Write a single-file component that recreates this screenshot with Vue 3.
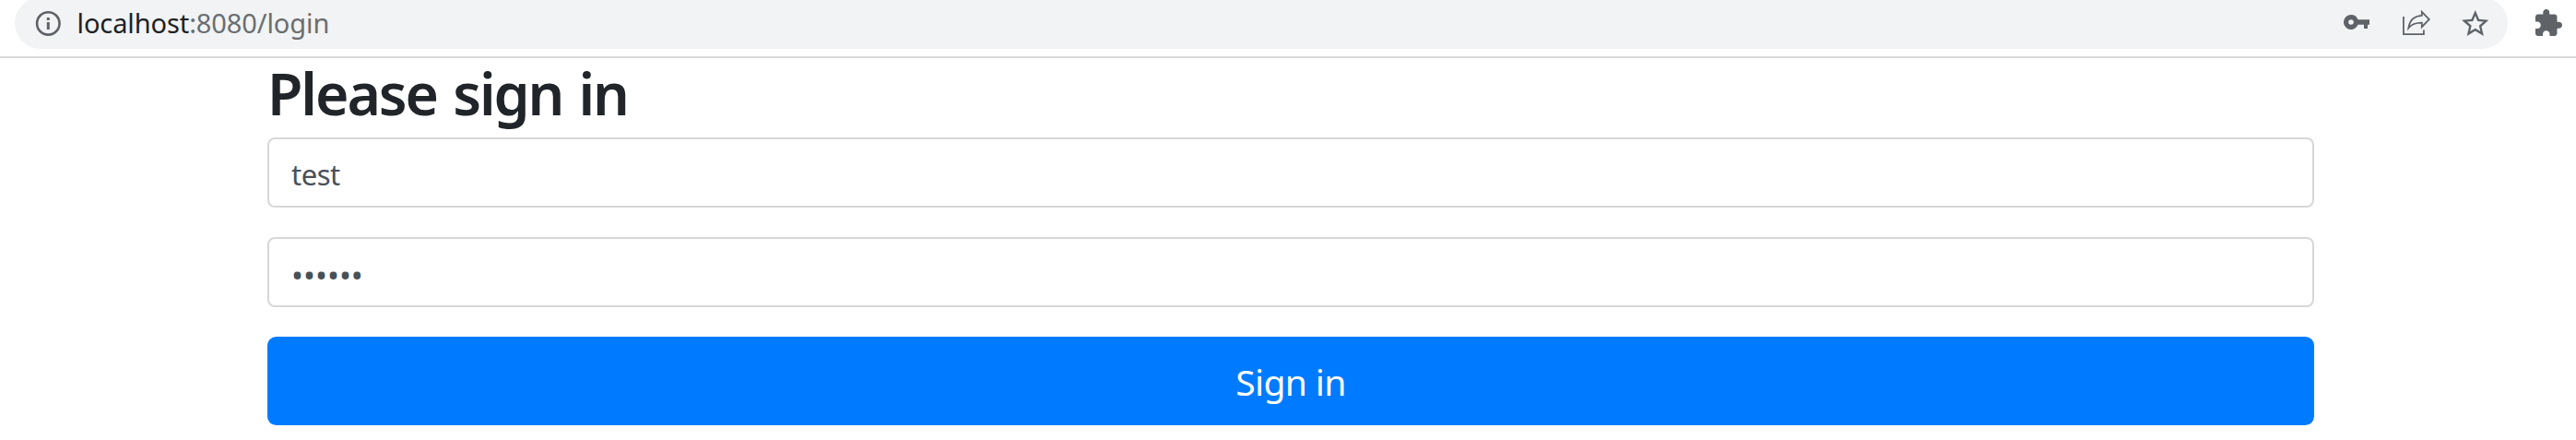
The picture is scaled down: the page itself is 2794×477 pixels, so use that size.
<script setup>
import { ref } from 'vue'
const username = ref('test')
const password = ref('secret')
</script>

<template>
  <div class="browser">
    <header class="toolbar">
      <div class="omnibox">
        <svg class="info" viewBox="0 0 32 32"><circle cx="16.3" cy="16.4" r="12.2" fill="none" stroke="#5f6368" stroke-width="2.6" /><path d="M14.800 10h3v2.900h-3zM14.800 15h3v8h-3z" fill="#5f6368" /></svg>
        <div class="url"><span class="host">localhost</span>:8080/login</div>
        <div class="actions">
          <svg class="key" viewBox="0 0 28 16" fill="#5f6368"><path fill-rule="evenodd" d="M8 0a8 8 0 1 0 7.5 10.700H22V15h4v-4.300h2V5.300H15.500A8 8 0 0 0 8 0zM8 5.200a2.800 2.800 0 1 1 0 5.600a2.800 2.800 0 0 1 0-5.600z" /></svg>
          <svg class="share" viewBox="0 0 30 28" fill="none" stroke="#5f6368" stroke-width="1.8"><path d="M.9 7v19.200H22.900V21.500" /><path d="M20.800 1.800L28.800 10L20.800 18.200V13.700C14 13.700 9.500 15.500 6.300 19.500C7.300 12 12 6.500 20.800 5.900Z" /></svg>
          <svg class="star" viewBox="2 2 20 19" fill="#5f6368"><path d="M22 9.240l-7.190-.62L12 2 9.190 8.630 2 9.240l5.460 4.730L5.820 21 12 17.270 18.180 21l-1.630-7.030L22 9.240zM12 15.400l-3.760 2.270 1-4.280-3.320-2.880 4.380-.38L12 6.100l1.710 4.040 4.380.38-3.320 2.880 1 4.280L12 15.400z" /></svg>
        </div>
      </div>
      <svg class="puzzle" viewBox="2 1 21 21" fill="#5f6368"><path d="M20.500 11H19V7c0-1.100-.9-2-2-2h-4V3.500C13 2.120 11.880 1 10.500 1S8 2.120 8 3.500V5H4c-1.100 0-1.990.9-1.990 2v3.800H3.500c1.490 0 2.700 1.210 2.700 2.700s-1.210 2.700-2.700 2.700H2V20c0 1.100.9 2 2 2h3.800v-1.500c0-1.490 1.210-2.700 2.700-2.700 1.490 0 2.700 1.210 2.700 2.700V22H17c1.100 0 2-.9 2-2v-4h1.500c1.380 0 2.500-1.120 2.500-2.500S21.880 11 20.500 11z" /></svg>
    </header>
    <form class="form" @submit.prevent>
      <h2>Please sign in</h2>
      <input v-model="username" class="field" type="text" />
      <input v-model="password" class="field password" type="password" />
      <button type="submit"><span>Sign in</span></button>
    </form>
  </div>
</template>

<style>
body {
  margin: 0;
  overflow: hidden;
  background: #fff;
}
</style>

<style scoped>
.browser {
  width: 2794px;
  height: 477px;
  overflow: hidden;
  background: #fff;
  font-family: "Noto Sans", "Open Sans", sans-serif;
}
.toolbar {
  box-sizing: border-box;
  display: flex;
  align-items: flex-start;
  height: 63px;
  padding-left: 16px;
  border-bottom: 2px solid #dadada;
}
.omnibox {
  box-sizing: border-box;
  display: flex;
  align-items: center;
  width: 2704px;
  height: 56px;
  margin-top: -3px;
  padding: 0 21px 0 20px;
  border-radius: 28px;
  background: #f1f3f4;
}
svg {
  display: block;
  flex: none;
}
.info {
  width: 32px;
  height: 32px;
}
.url {
  margin-left: 15.500px;
  font-size: 29px;
  letter-spacing: -0.1px;
  line-height: 40px;
  color: #6a6d71;
}
.host {
  color: #202124;
}
.actions {
  display: flex;
  align-items: center;
  margin-left: auto;
}
.key {
  width: 28px;
  height: 16px;
  margin: 0 36px 2px 0;
}
.share {
  width: 30px;
  height: 28px;
  margin-right: 33.500px;
}
.star {
  width: 29.500px;
  height: 28px;
}
.puzzle {
  width: 29px;
  height: 29px;
  margin: 10px 0 0 30px;
}
.form {
  display: flex;
  flex-direction: column;
  width: 2220px;
  margin-left: 290px;
}
h2 {
  height: 76px;
  margin: 0 0 10px;
  font-size: 62.500px;
  font-weight: 600;
  letter-spacing: -2.100px;
  word-spacing: 3px;
  line-height: 75px;
  color: #212529;
}
.field {
  box-sizing: border-box;
  width: 100%;
  height: 76px;
  margin: 0 0 32px;
  padding: 3px 24px 0;
  border: 2px solid #d7d7d7;
  border-radius: 8px;
  outline: none;
  background: #fff;
  font: 31px "Noto Sans", "Open Sans", sans-serif;
  letter-spacing: -0.5px;
  color: #495057;
}
.password {
  padding-top: 4px;
  font-size: 34.500px;
  letter-spacing: 0;
}
button {
  height: 96px;
  padding: 0;
  border: 0;
  border-radius: 9.600px;
  background: #007bff;
  font: 39px "Noto Sans", "Open Sans", sans-serif;
  letter-spacing: -0.6px;
  color: #fff;
}
</style>
